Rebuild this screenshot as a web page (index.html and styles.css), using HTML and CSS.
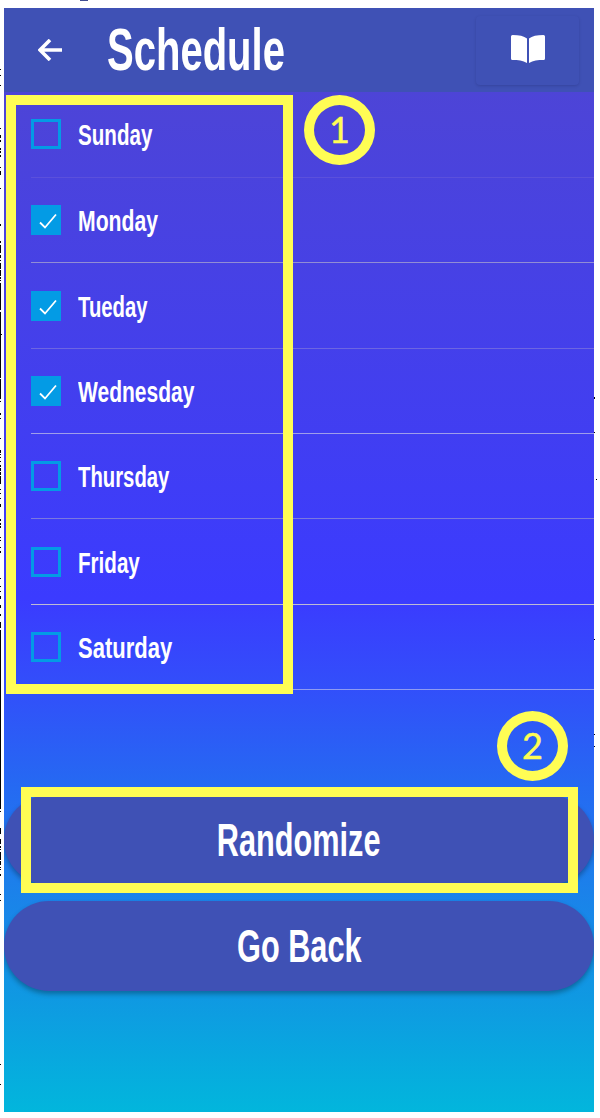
FILE: index.html
```html
<!DOCTYPE html>
<html lang="en">
<head>
<meta charset="utf-8">
<title>Schedule</title>
<link rel="stylesheet" href="styles.css">
</head>
<body>
<main class="app">
  <header class="bar">
    <svg class="back" viewBox="0 0 24 22"><path d="M24 11H2M12 1L2 11l10 10" fill="none" stroke="#fff" stroke-width="3.6"/></svg>
    <h1 class="title"><span class="fit" style="--fit:.667">Schedule</span></h1>
    <button class="guide" aria-label="Guide"><svg class="book" viewBox="0 0 34 28"><path d="M0 1.5Q0 0 1.5 0C8 0 13 1 16 3.600V28C12 25.500 7 25 1.500 25Q0 25 0 23.500ZM34 1.500Q34 0 32.500 0C26 0 21 1 18 3.600V28C22 25.500 27 25 32.500 25Q34 25 34 23.500Z" fill="#fff"/></svg></button>
  </header>
  <ul class="days">
    <li class="day line-a"><span class="box"></span><span class="fit" style="--fit:.71">Sunday</span></li>
    <li class="day line-b"><span class="box on"><svg class="tick" viewBox="0 0 30 30"><path d="M9 17.500l5 5L25 9.500"/></svg></span><span class="fit" style="--fit:.73">Monday</span></li>
    <li class="day line-c"><span class="box on"><svg class="tick" viewBox="0 0 30 30"><path d="M9 17.500l5 5L25 9.500"/></svg></span><span class="fit" style="--fit:.70">Tueday</span></li>
    <li class="day line-d"><span class="box on"><svg class="tick" viewBox="0 0 30 30"><path d="M9 17.500l5 5L25 9.500"/></svg></span><span class="fit" style="--fit:.725">Wednesday</span></li>
    <li class="day line-e"><span class="box"></span><span class="fit" style="--fit:.70">Thursday</span></li>
    <li class="day line-f"><span class="box"></span><span class="fit" style="--fit:.71">Friday</span></li>
    <li class="day line-g"><span class="box"></span><span class="fit" style="--fit:.76">Saturday</span></li>
  </ul>
  <div class="actions">
    <button class="action"><span class="fit center" style="--fit:.667">Randomize</span></button>
    <button class="action"><span class="fit center" style="--fit:.667">Go Back</span></button>
  </div>
</main>
<div class="mark frame-days"></div>
<div class="mark badge badge-one">1</div>
<div class="mark frame-random"></div>
<div class="mark badge badge-two">2</div>
<svg class="edges" width="600" height="1118" viewBox="0 0 600 1118" shape-rendering="crispEdges">
  <path fill="#000" d="M0 69h1v1h-1zM0 75h1v1h-1zM0 85h1v1h-1zM0 128h1v1h-1zM0 135h1v3h-1zM0 140h1v2h-1zM0 148h1v2h-1zM0 151h1v2h-1zM0 155h1v2h-1zM0 167h1v1h-1zM0 171h1v4h-1zM0 188h1v1h-1zM0 224h1v2h-1zM0 241h1v2h-1zM0 245h1v8h-1zM0 255h1v3h-1zM0 260h1v1h-1zM0 263h1v6h-1zM0 270h1v6h-1zM0 277h1v2h-1zM0 280h1v1h-1zM0 283h1v27h-1zM0 312h1v66h-1zM1 334h1v1h-1zM0 379h1v20h-1zM0 401h1v1h-1zM0 413h1v2h-1zM0 418h1v1h-1zM0 438h1v1h-1zM0 450h1v3h-1zM0 454h1v1h-1zM0 457h1v1h-1zM0 461h1v1h-1zM0 465h1v2h-1zM0 468h1v3h-1zM0 472h1v3h-1zM0 476h1v8h-1zM0 489h1v1h-1zM0 493h1v1h-1zM0 498h1v1h-1zM0 504h1v3h-1zM0 519h1v2h-1zM0 523h1v2h-1zM0 526h1v2h-1zM0 537h1v1h-1zM0 540h1v1h-1zM0 547h1v1h-1zM0 551h1v2h-1zM0 578h1v1h-1zM0 586h1v1h-1zM0 591h1v1h-1zM0 596h1v3h-1zM0 605h1v3h-1zM0 614h1v2h-1zM0 622h1v6h-1zM0 630h1v179h-1zM0 811h1v1h-1zM0 828h1v6h-1zM0 839h1v5h-1zM0 846h1v2h-1zM0 849h1v1h-1zM0 852h1v8h-1zM0 861h1v4h-1zM0 867h1v1h-1zM0 869h1v1h-1zM0 874h1v2h-1zM0 894h1v1h-1zM0 900h1v1h-1zM0 1064h1v1h-1zM0 1084h1v1h-1zM594 397h1v2h-1zM594 432h1v1h-1zM596 479h1v1h-1zM594 639h1v1h-1zM594 734h1v1h-1zM594 746h1v1h-1z"/>
  <path fill="#3f4c92" d="M80 0h8v1h-8z"/>
</svg>
</body>
</html>
```
FILE: styles.css
```css
* { box-sizing: border-box; }
body { margin: 0; padding: 8px 6px 6px 4px; width: 600px; height: 1118px; background: #fff; position: relative; overflow: hidden; font-family: "Liberation Sans", sans-serif; font-weight: 700; color: #fff; }
button { font: inherit; color: inherit; border: 0; padding: 0; background: #3f51b5; }
.app { height: 1104px; overflow: hidden; background: linear-gradient(#5046d0 0, #3b3bff 590px, #324ffa 680px, #256af2 780px, #1b82ea 885px, #0f99e2 990px, #02b6dc 1104px); }
.bar { height: 84px; background: #3f51b5; display: flex; align-items: center; padding: 0 15px 0 34px; }
.back { width: 24px; height: 22px; flex: none; }
.title { margin: 0 0 0 45px; width: 180px; font-size: 60px; line-height: 84px; }
.fit { display: block; white-space: nowrap; transform: scaleX(var(--fit)); transform-origin: left center; }
.fit.center { transform-origin: center; }
.guide { margin-left: auto; width: 103px; height: 69px; border-radius: 4px; box-shadow: 0 1px 3px rgba(0,0,40,.16); display: flex; align-items: center; justify-content: center; }
.book { width: 34px; height: 28px; margin-bottom: 2px; }
.days { margin: 0; padding: .3px 0 0 27px; list-style: none; }
.day { height: 85.360px; display: flex; align-items: center; gap: 17px; border-bottom: 1px solid; font-size: 29px; line-height: 36px; }
.day .fit { padding-top: 2px; }
.box { flex: none; width: 30px; height: 30px; border: 3px solid #039be5; }
.box.on { border: 0; background: #039be5; }
.tick { display: block; width: 30px; height: 30px; fill: none; stroke: #fff; stroke-width: 1.800; }
.day:nth-child(n+2) { position: relative; top: .4px; }
.line-a { border-color: #5b50dc; }
.line-b { border-color: #918dd5; }
.line-c { border-color: #6d65e2; }
.line-d { border-color: #a09eea; }
.line-e { border-color: #7b78df; }
.line-f { border-color: #bebbd4; }
.line-g { border-color: #8f9bf2; }
.actions { padding-top: 105.180px; display: flex; flex-direction: column; gap: 16px; }
.action { height: 90px; border-radius: 45px; box-shadow: 0 3px 5px rgba(0,0,0,.3); font-size: 46px; line-height: 90px; display: flex; justify-content: center; }
.mark { position: absolute; border: 10px solid #fffd54; }
.frame-days { left: 6px; top: 95px; width: 287px; height: 599px; }
.frame-random { left: 21px; top: 787px; width: 557px; height: 106px; }
.badge { width: 71px; height: 70px; border-radius: 50%; color: #fffd54; font: 400 36px/48px Lato, sans-serif; text-align: center; -webkit-text-stroke: .5px #fffd54; }
.badge-one { left: 304px; top: 95px; }
.badge-two { left: 497px; top: 711px; }
.edges { position: absolute; left: 0; top: 0; }
```
